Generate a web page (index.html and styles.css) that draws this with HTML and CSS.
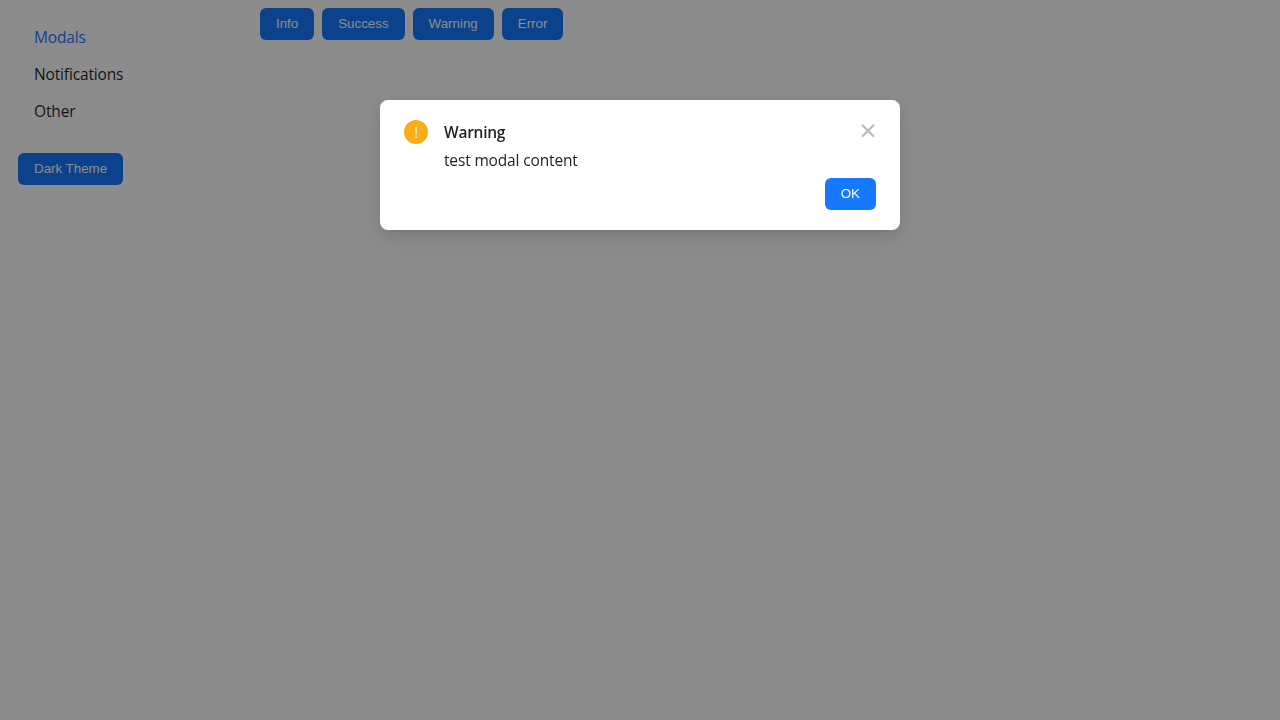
FILE: index.html
```html
<!DOCTYPE html>
<html lang="en">
<head>
<meta charset="utf-8">
<title>Modals</title>
<link rel="stylesheet" href="styles.css">
</head>
<body>
<div class="app">
  <aside class="sidebar">
    <nav class="menu">
      <a class="menu-item active">Modals</a>
      <a class="menu-item">Notifications</a>
      <a class="menu-item">Other</a>
    </nav>
    <button class="btn">Dark Theme</button>
  </aside>
  <main class="content">
    <button class="btn">Info</button>
    <button class="btn">Success</button>
    <button class="btn">Warning</button>
    <button class="btn">Error</button>
  </main>
</div>
<div class="mask">
  <div class="modal">
    <svg class="status" viewBox="0 0 24 24" width="24" height="24"><circle cx="12" cy="12" r="12" fill="#faad14"/><path d="M11.2 7h1.8l-.3 8h-1.2zM11.2 16.4h1.8v1.7h-1.8z" fill="#fff" fill-opacity=".72"/></svg>
    <div class="modal-body">
      <div class="modal-title">Warning</div>
      <div class="modal-text">test modal content</div>
      <div class="modal-footer"><button class="btn">OK</button></div>
    </div>
    <svg class="close" viewBox="0 0 14 14" width="14" height="14"><path d="M1 .8l12 12M13 .8L1 12.8" fill="none" stroke="#b8b8b8" stroke-width="2"/></svg>
  </div>
</div>
</body>
</html>
```
FILE: styles.css
```css
body {
  margin: 0;
  background: #fff;
  color: rgba(0, 0, 0, 0.88);
  font-family: "Segoe UI", "Open Sans", "Noto Sans", sans-serif;
  font-size: 15.5px;
  line-height: 21px;
  letter-spacing: -0.15px;
}

.app {
  display: flex;
  height: 100vh;
}

.sidebar {
  width: 242px;
  padding: 19px 18px;
  box-sizing: border-box;
}

.menu {
  display: flex;
  flex-direction: column;
  margin-bottom: 23px;
}

.menu-item {
  padding: 8px 16px;
}

.active {
  color: #1677ff;
}

.content {
  display: flex;
  align-items: flex-start;
  gap: 8px;
  padding: 8px 18px;
}

.btn {
  height: 32px;
  padding: 0 16px 2px;
  border: 0;
  border-radius: 6px;
  background: #1677ff;
  color: #fff;
  font: 13.3333px "Liberation Sans", Arial, sans-serif;
  letter-spacing: 0;
}

.mask {
  position: fixed;
  inset: 0;
  background: rgba(0, 0, 0, 0.45);
}

.modal {
  display: flex;
  box-sizing: border-box;
  width: 520px;
  height: 130px;
  margin: 100px auto 0;
  padding: 20px 24px;
  border-radius: 8px;
  background: #fff;
  box-shadow: 0 6px 16px 0 rgba(0, 0, 0, 0.08), 0 3px 6px -4px rgba(0, 0, 0, 0.12), 0 9px 28px 8px rgba(0, 0, 0, 0.05);
}

.status {
  flex: none;
  margin-right: 16px;
}

.modal-body {
  flex: 1;
}

.modal-title {
  height: 24px;
  line-height: 24px;
  margin-bottom: 6px;
  font-weight: 600;
  letter-spacing: -0.25px;
}

.modal-text {
  margin-bottom: 7px;
}

.modal-footer {
  display: flex;
  justify-content: flex-end;
  margin-right: -15px;
}

.close {
  flex: none;
  margin: 4px 1px 0 0;
}
```
